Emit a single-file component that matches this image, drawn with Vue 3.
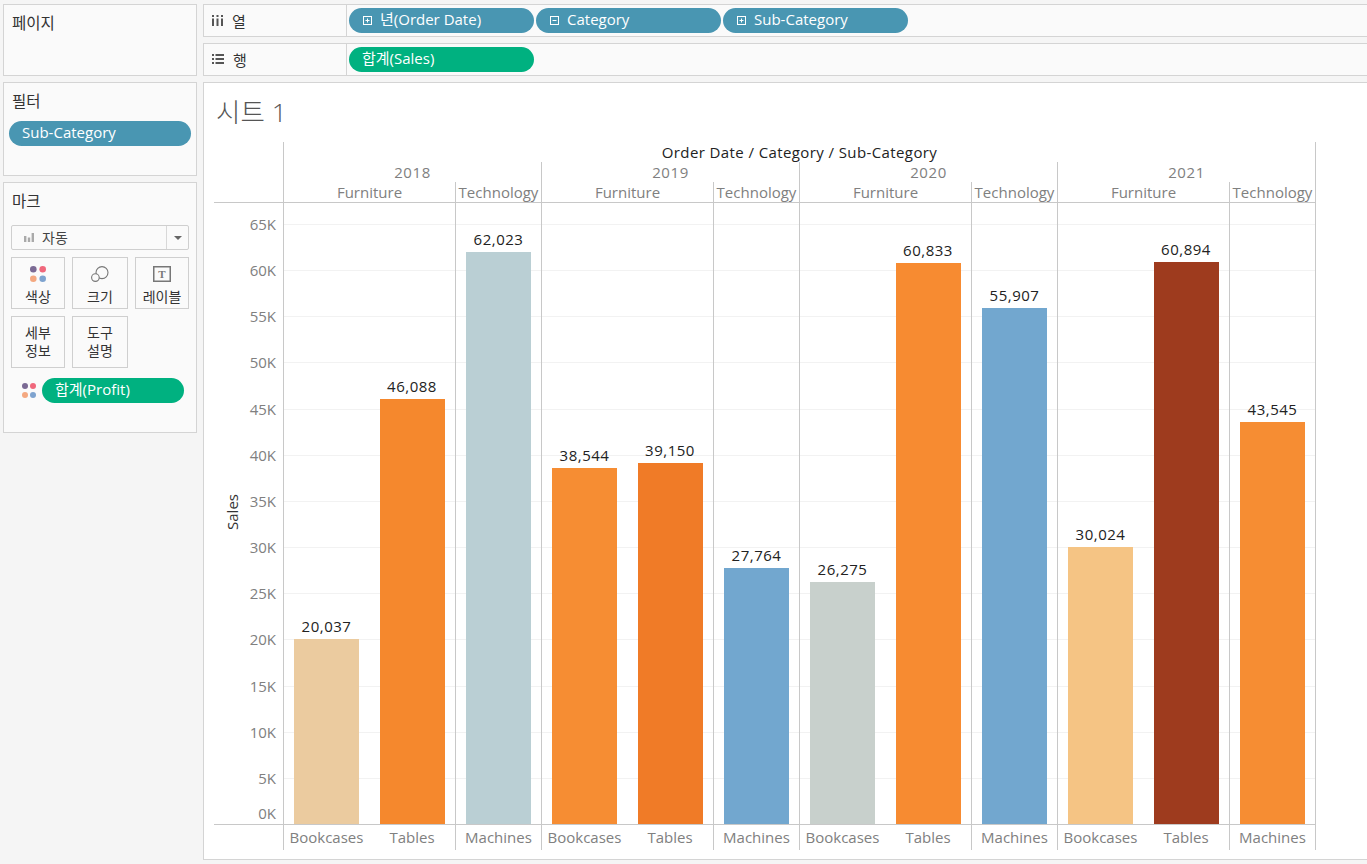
<script setup>
const scale = 599.6 / 65000
const gridScale = 600 / 65000
const ticks = Array.from({ length: 14 }, (_, i) => i * 5)
const groups = [
  { year: 2018, bars: [['Bookcases', 20037, '#ebcb9f'], ['Tables', 46088, '#f5882d'], ['Machines', 62023, '#bacfd4']] },
  { year: 2019, bars: [['Bookcases', 38544, '#f68d33'], ['Tables', 39150, '#f07b27'], ['Machines', 27764, '#72a7cf']] },
  { year: 2020, bars: [['Bookcases', 26275, '#c8d0cc'], ['Tables', 60833, '#f78b31'], ['Machines', 55907, '#72a7cf']] },
  { year: 2021, bars: [['Bookcases', 30024, '#f5c484'], ['Tables', 60894, '#9e3b1e'], ['Machines', 43545, '#f68d33']] }
]
const fmt = (n) => n.toLocaleString('en-US')
const cols = [
  { label: '년(Order Date)', kind: 'plus' },
  { label: 'Category', kind: 'minus' },
  { label: 'Sub-Category', kind: 'plus' }
]
</script>

<template>
  <div class="app">
    <aside class="side">
      <section class="panel pages"><h3>페이지</h3></section>
      <section class="panel filters">
        <h3>필터</h3>
        <div class="pill blue filter-pill">Sub-Category</div>
      </section>
      <section class="panel marks">
        <h3>마크</h3>
        <div class="dropdown">
          <span class="dd-main">
            <svg width="10" height="10" viewBox="0 0 10 10"><rect x="0" y="4" width="2.4" height="6" fill="#aaa"/><rect x="3.8" y="5.5" width="2.4" height="4.5" fill="#aaa"/><rect x="7.6" y="1" width="2.4" height="9" fill="#aaa"/></svg>
            자동
          </span>
          <span class="dd-arrow"><i></i></span>
        </div>
        <div class="cards">
          <div class="card">
            <svg class="ic" width="16" height="16" viewBox="0 0 16 16"><circle cx="3.3" cy="3.3" r="3.3" fill="#7b6a94"/><circle cx="12.7" cy="3.3" r="3.3" fill="#f0687c"/><circle cx="3.3" cy="12.7" r="3.3" fill="#f4a880"/><circle cx="12.7" cy="12.7" r="3.3" fill="#7ea3cf"/></svg>
            <span>색상</span>
          </div>
          <div class="card">
            <svg class="ic" width="18" height="16" viewBox="0 0 18 16" fill="none" stroke="#777" stroke-width="1.1"><circle cx="11" cy="6.6" r="6"/><circle cx="4.4" cy="11.6" r="3.8" fill="#fafafa"/></svg>
            <span>크기</span>
          </div>
          <div class="card">
            <svg class="ic" width="18" height="16" viewBox="0 0 18 16"><rect x="0.75" y="0.75" width="16.5" height="14.5" fill="none" stroke="#777" stroke-width="1.5"/><text x="9" y="12" text-anchor="middle" font-size="11" font-weight="700" font-family="Liberation Serif, serif" fill="#777">T</text></svg>
            <span>레이블</span>
          </div>
          <div class="card text-only"><span>세부<br>정보</span></div>
          <div class="card text-only"><span>도구<br>설명</span></div>
        </div>
        <div class="profit">
          <svg width="14" height="15" viewBox="0 0 14 15"><circle cx="3" cy="3" r="3" fill="#7b6a94"/><circle cx="11" cy="3" r="3" fill="#f0687c"/><circle cx="3" cy="12" r="3" fill="#f4a880"/><circle cx="11" cy="12" r="3" fill="#7ea3cf"/></svg>
          <div class="pill green profit-pill">합계(Profit)</div>
        </div>
      </section>
    </aside>

    <main class="main">
      <div class="shelf">
        <div class="shelf-head">
          <svg width="11" height="11" viewBox="0 0 11 11" fill="#555"><rect x="0" y="0" width="2" height="2"/><rect x="0" y="3.5" width="2" height="7.5"/><rect x="4.5" y="0" width="2" height="2"/><rect x="4.5" y="3.5" width="2" height="7.5"/><rect x="9" y="0" width="2" height="2"/><rect x="9" y="3.5" width="2" height="7.5"/></svg>
          <span>열</span>
        </div>
        <div class="shelf-body">
          <div v-for="c in cols" :key="c.label" class="pill blue shelf-pill">
            <svg width="11" height="11" viewBox="0 0 11 11" fill="none" stroke="#fff" stroke-width="1"><rect x="1.5" y="1.5" width="8" height="8"/><path d="M3.5 5.5h4"/><path v-if="c.kind === 'plus'" d="M5.5 3.5v4"/></svg>
            <span>{{ c.label }}</span>
          </div>
        </div>
      </div>
      <div class="shelf">
        <div class="shelf-head">
          <svg width="12" height="10" viewBox="0 0 12 10" fill="#555"><rect x="0" y="0" width="2" height="2"/><rect x="3.5" y="0" width="8.5" height="2"/><rect x="0" y="4" width="2" height="2"/><rect x="3.5" y="4" width="8.5" height="2"/><rect x="0" y="8" width="2" height="2"/><rect x="3.5" y="8" width="8.5" height="2"/></svg>
          <span>행</span>
        </div>
        <div class="shelf-body">
          <div class="pill green shelf-pill sales">합계(Sales)</div>
        </div>
      </div>

      <section class="sheet">
        <h1 class="title">시트 1</h1>
        <div class="viz">
          <div class="head-row">
            <div class="head-spacer"></div>
            <div class="head-title">Order Date / Category / Sub-Category</div>
          </div>
          <div class="head-row years">
            <div class="head-spacer"></div>
            <div v-for="g in groups" :key="g.year" class="year">{{ g.year }}</div>
          </div>
          <div class="head-row cats">
            <div class="head-spacer"></div>
            <template v-for="g in groups" :key="g.year">
              <div class="cat furn">Furniture</div>
              <div class="cat tech">Technology</div>
            </template>
          </div>
          <div class="plot">
            <div class="axis">
              <span class="axis-title">Sales</span>
              <span v-for="t in ticks" :key="t" class="tick" :class="{ zero: t === 0 }" :style="{ bottom: t * 1000 * gridScale + 'px' }">{{ t }}K</span>
            </div>
            <div class="panes">
              <i v-for="t in ticks.slice(1)" :key="t" class="grid" :style="{ bottom: t * 1000 * gridScale + 'px' }"></i>
              <template v-for="g in groups" :key="g.year">
                <div v-for="(b, i) in g.bars" :key="b[0]" class="pane" :class="{ lined: i !== 1 }">
                  <span class="val">{{ fmt(b[1]) }}</span>
                  <div class="bar" :style="{ height: b[1] * scale + 'px', background: b[2] }"></div>
                </div>
              </template>
            </div>
          </div>
          <div class="foot">
            <div class="head-spacer"></div>
            <template v-for="g in groups" :key="g.year">
              <div v-for="(b, i) in g.bars" :key="b[0]" class="foot-cell" :class="{ lined: i !== 1 }">{{ b[0] }}</div>
            </template>
          </div>
        </div>
      </section>
    </main>
  </div>
</template>

<style>
html, body { margin: 0; background: #f5f5f5; }
</style>

<style scoped>
.app {
  box-sizing: border-box;
  width: 1367px;
  height: 864px;
  padding: 4px 0 4px 3px;
  display: flex;
  gap: 6px;
  overflow: hidden;
  background: #f5f5f5;
  font-family: "Open Sans", "Noto Sans CJK KR", sans-serif;
  color: #333;
}
.side { width: 194px; display: flex; flex-direction: column; gap: 6px; flex: none; }
.panel { box-sizing: border-box; background: #fafafa; border: 1px solid #d4d4d4; padding: 0 8px; }
.panel h3 { margin: 0; font-weight: 400; font-size: 15.5px; line-height: 20px; padding: 8px 0 0; color: #333; }
.pages { height: 72px; }
.filters { height: 94px; padding: 0 5px; }
.filters h3 { padding-left: 3px; }
.marks { height: 251px; padding: 0 7px; }
.marks h3 { padding-left: 1px; }
.pill { box-sizing: border-box; height: 25px; border-radius: 13px; color: #fff; font-size: 15px; line-height: 23px; padding-bottom: 2px; display: flex; align-items: center; }
.blue { background: #4996b2; }
.green { background: #00b180; }
.filter-pill { margin-top: 10px; width: 182px; padding-left: 13px; }
.dropdown { margin-top: 14px; height: 25px; width: 178px; box-sizing: border-box; border: 1px solid #cfcfcf; border-radius: 2px; display: flex; font-size: 14px; }
.dd-main { flex: 1; display: flex; align-items: center; gap: 8px; padding-left: 12px; padding-bottom: 1px; border-right: 1px solid #d8d8d8; color: #444; }
.dd-arrow { width: 21px; display: flex; align-items: center; justify-content: center; }
.dd-arrow i { border: 4px solid transparent; border-top-color: #666; border-bottom: 0; }
.cards { margin-top: 7px; display: grid; grid-template-columns: 54px 56px 54px; grid-auto-rows: 52px; column-gap: 7px; row-gap: 7px; }
.card { box-sizing: border-box; border: 1px solid #cfcfcf; padding-top: 8px; display: flex; flex-direction: column; align-items: center; font-size: 14px; line-height: 18px; color: #333; text-align: center; }
.text-only { padding-top: 7px; }
.ic { margin-bottom: 6px; flex: none; }
.profit { margin-top: 10px; padding-left: 11px; display: flex; align-items: center; gap: 6px; }
.profit-pill { width: 142px; padding-left: 13px; }
.main { flex: 1; display: flex; flex-direction: column; gap: 6px; min-width: 0; }
.shelf { box-sizing: border-box; height: 33px; display: flex; background: #fafafa; border-top: 1px solid #d4d4d4; border-bottom: 1px solid #d4d4d4; border-left: 1px solid #d4d4d4; }
.shelf-head { box-sizing: border-box; width: 143px; flex: none; border-right: 1px solid #d4d4d4; display: flex; align-items: center; gap: 9px; padding-left: 8px; padding-bottom: 1px; font-size: 15px; }
.shelf-body { display: flex; align-items: center; gap: 2px; padding-left: 2px; }
.shelf-pill { width: 185px; padding-left: 13px; gap: 7px; }
.shelf-pill svg { position: relative; top: 1px; }
.sheet { box-sizing: border-box; flex: 1; background: #fff; border: 1px solid #d4d4d4; border-right: 0; padding: 0 0 0 10px; }
.title { margin: 0; height: 59px; padding: 14px 0 0 2px; box-sizing: border-box; font-weight: 300; font-size: 26.5px; line-height: 30px; color: #555; }
.viz { width: 1102px; display: flex; flex-direction: column; }
.head-row { display: flex; height: 20px; font-size: 15px; line-height: 20px; }
.head-spacer { width: 69px; flex: none; }
.head-title { box-sizing: border-box; width: 1033px; border-left: 1px solid #c8c8c8; border-right: 1px solid #c8c8c8; text-align: center; color: #222; font-weight: 500; letter-spacing: 0.4px; }
.year { box-sizing: border-box; width: 258px; border-left: 1px solid #c8c8c8; text-align: center; color: #808080; letter-spacing: 0.6px; }
.year:last-child { width: 259px; border-right: 1px solid #c8c8c8; }
.cat { box-sizing: border-box; border-left: 1px solid #c8c8c8; text-align: center; color: #808080; white-space: nowrap; }
.furn { width: 172px; }
.tech { width: 86px; }
.cat.tech:last-child { width: 87px; border-right: 1px solid #c8c8c8; }
.plot { display: flex; height: 623px; box-sizing: border-box; border-top: 1px solid #c8c8c8; border-bottom: 1px solid #c8c8c8; }
.axis { width: 69px; flex: none; position: relative; }
.axis-title { position: absolute; left: 18px; top: 309px; transform: translate(-50%, -50%) rotate(-90deg); font-size: 15px; color: #333; }
.tick { position: absolute; right: 7px; font-size: 15px; line-height: 20px; color: #808080; transform: translateY(50%); }
.tick.zero { transform: translateY(-1px); }
.panes { flex: 1; position: relative; display: flex; border-right: 1px solid #c8c8c8; }
.grid { position: absolute; left: 0; right: 0; height: 1px; background: #f2f2f2; transform: translateY(1px); }
.pane { position: relative; box-sizing: border-box; width: 86px; display: flex; flex-direction: column; align-items: center; justify-content: flex-end; }
.pane.lined { border-left: 1px solid #c8c8c8; }
.val { font-size: 15px; line-height: 20px; color: #222; margin-bottom: 3px; letter-spacing: 0.5px; }
.bar { width: 65px; }
.foot { display: flex; height: 25px; font-size: 15px; line-height: 24px; }
.foot-cell { box-sizing: border-box; width: 86px; text-align: center; color: #808080; white-space: nowrap; }
.foot-cell.lined { border-left: 1px solid #c8c8c8; }
.foot-cell:last-child { width: 87px; border-right: 1px solid #c8c8c8; }
</style>
